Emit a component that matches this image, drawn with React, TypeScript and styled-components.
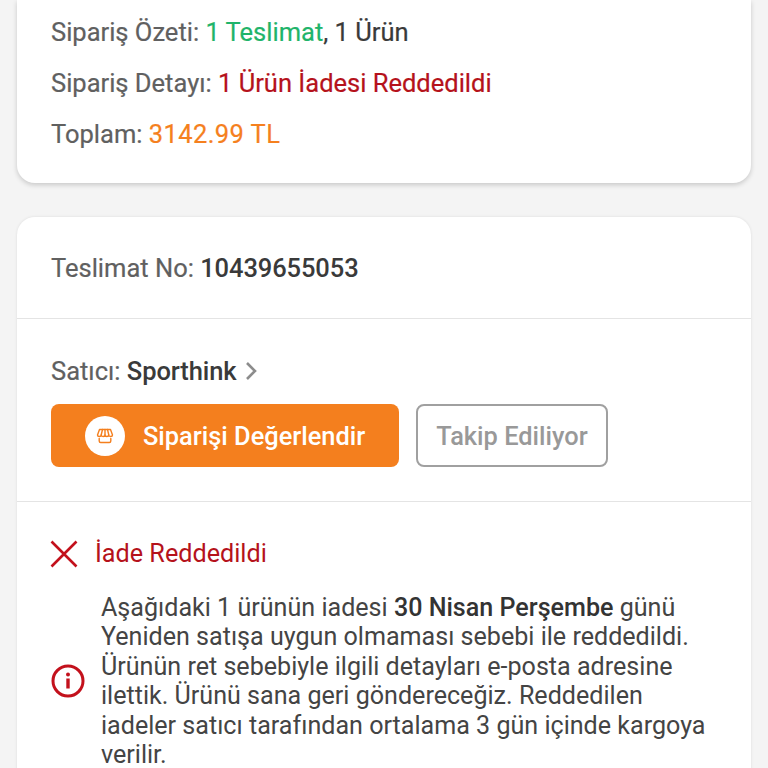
import React from "react";
import styled, { createGlobalStyle } from "styled-components";

const GlobalStyle = createGlobalStyle`
  html, body {
    margin: 0;
    height: 768px;
    overflow: hidden;
    background: #f4f4f4;
    font-family: Roboto, "Liberation Sans", sans-serif;
  }
`;

const Page = styled.div`
  height: 768px;
  overflow: hidden;
  padding: 0 17px;
  display: flex;
  flex-direction: column;
  gap: 34px;
`;

const Card = styled.section<{ $top?: boolean }>`
  background: #fff;
  border-radius: ${(p) => (p.$top ? "0 0 18px 18px" : "18px 18px 0 0")};
  box-shadow: ${(p) => (p.$top ? "0 2px 5px rgba(0, 0, 0, 0.18)" : "0 0 3px rgba(0, 0, 0, 0.1)")};
  flex: none;
`;

const Summary = styled.div`
  padding: 18px 34px 35px;
  display: flex;
  flex-direction: column;
  gap: 23px;
`;

const Line = styled.div`
  font-size: 25.5px;
  line-height: 28px;
  color: #606060;
  white-space: nowrap;
  -webkit-text-stroke: 0.2px currentColor;
`;

const Accent = styled.span<{ $color: string; $spacing?: number }>`
  color: ${(p) => p.$color};
  letter-spacing: ${(p) => p.$spacing || 0}px;
`;

const Plain = styled.span`
  color: #3a3a3a;
`;

const Value = styled.span`
  color: #3a3a3a;
  font-weight: 500;
  letter-spacing: -0.1px;
  -webkit-text-stroke: 0;
`;

const Section = styled.div<{ $last?: boolean }>`
  padding: 0 34px;
  border-bottom: ${(p) => (p.$last ? "none" : "1px solid #e4e4e4")};
`;

const DeliveryRow = styled(Line)`
  padding: 37px 0 36px;
`;

const SellerRow = styled(Line)`
  padding-top: 38px;
  display: flex;
  align-items: center;
  gap: 9px;
`;

const Buttons = styled.div`
  display: flex;
  gap: 17px;
  padding: 19px 0 34px;
`;

const PrimaryButton = styled.button`
  width: 348px;
  height: 63px;
  border: none;
  border-radius: 8px;
  background: #f47f1e;
  color: #fff;
  font: 500 25.4px Roboto, sans-serif;
  display: flex;
  align-items: center;
  gap: 18px;
  padding: 0 0 0 34px;
`;

const IconDisc = styled.span`
  width: 40px;
  height: 40px;
  border-radius: 50%;
  background: #fff;
  display: flex;
  align-items: center;
  justify-content: center;
`;

const OutlineButton = styled.button`
  width: 192px;
  height: 63px;
  border: 2px solid #a0a0a0;
  border-radius: 8px;
  background: #fff;
  color: #999;
  font: 500 25.4px Roboto, sans-serif;
  padding: 0;
`;

const StatusRow = styled.div`
  display: flex;
  align-items: center;
  gap: 17px;
  padding-top: 37px;
  margin-left: -1px;
  color: #b5121b;
  font-size: 25.2px;
  line-height: 30px;
`;

const NoteRow = styled.div`
  display: flex;
  align-items: center;
  gap: 16px;
  padding: 24px 0 30px;
`;

const NoteText = styled.p`
  margin: 0;
  width: 620px;
  font-size: 25.1px;
  line-height: 29.4px;
  color: #444;
`;

const Strong = styled.b`
  font-weight: 500;
  color: #333;
`;

const StoreIcon = () => (
  <svg width="20" height="20" viewBox="0 0 20 20" fill="none" stroke="#f47f1e" strokeWidth="1.4" strokeLinejoin="round" strokeLinecap="round">
    <path d="M4.5 3.500h11l2 5.500c0 1-1 1.500-1.900 1.500s-1.800-.5-1.900-1.500c0 1-1 1.500-1.850 1.500s-1.850-.5-1.850-1.500c0 1-1 1.500-1.850 1.500S6.300 10 6.200 9c0 1-.9 1.500-1.800 1.500S2.500 10 2.500 9z" />
    <path d="M7.500 3.500L6.200 9M10 3.500V9M12.500 3.500L13.800 9" />
    <path d="M4.200 12.500v2.500c0 1 .6 1.500 1.500 1.500h8.600c.9 0 1.500-.5 1.500-1.500v-2.500" />
  </svg>
);

const Chevron = () => (
  <svg width="13" height="20" viewBox="0 0 13 20" fill="none" stroke="#8c8c8c" strokeWidth="2.600">
    <path d="M2 2l8 8-8 8" />
  </svg>
);

const CrossIcon = () => (
  <svg width="28" height="28" viewBox="0 0 28 28" fill="none" stroke="#c3111c" strokeWidth="2.600" style={{ flex: "none" }}>
    <path d="M1.500 1.500l25 25M26.500 1.500l-25 25" />
  </svg>
);

const InfoIcon = () => (
  <svg width="34" height="34" viewBox="0 0 34 34" fill="none" style={{ flex: "none" }}>
    <circle cx="17" cy="17" r="15" stroke="#c3111c" strokeWidth="3" />
    <circle cx="17" cy="10.500" r="2" fill="#c3111c" />
    <rect x="15.300" y="14.500" width="3.400" height="10" fill="#c3111c" />
  </svg>
);

export default function App() {
  return (
    <Page>
      <GlobalStyle />
      <Card $top>
        <Summary>
          <Line>
            Sipariş Özeti: <Accent $color="#1fb46a">1 Teslimat</Accent>
            <Plain>, 1 Ürün</Plain>
          </Line>
          <Line>
            Sipariş Detayı: <Accent $color="#b5121b">1 Ürün İadesi Reddedildi</Accent>
          </Line>
          <Line>
            Toplam: <Accent $color="#f5801e" $spacing={0.4}>3142.99 TL</Accent>
          </Line>
        </Summary>
      </Card>
      <Card>
        <Section>
          <DeliveryRow>
            Teslimat No: <Value>10439655053</Value>
          </DeliveryRow>
        </Section>
        <Section>
          <SellerRow>
            <span>
              Satıcı: <Value>Sporthink</Value>
            </span>
            <Chevron />
          </SellerRow>
          <Buttons>
            <PrimaryButton>
              <IconDisc>
                <StoreIcon />
              </IconDisc>
              Siparişi Değerlendir
            </PrimaryButton>
            <OutlineButton>Takip Ediliyor</OutlineButton>
          </Buttons>
        </Section>
        <Section $last>
          <StatusRow>
            <CrossIcon />
            İade Reddedildi
          </StatusRow>
          <NoteRow>
            <InfoIcon />
            <NoteText>
              Aşağıdaki 1 ürünün iadesi <Strong>30 Nisan Perşembe</Strong> günü Yeniden satışa uygun olmaması sebebi ile
              reddedildi. Ürünün ret sebebiyle ilgili detayları e-posta adresine ilettik. Ürünü sana geri göndereceğiz.
              Reddedilen iadeler satıcı tarafından ortalama 3 gün içinde kargoya verilir.
            </NoteText>
          </NoteRow>
        </Section>
      </Card>
    </Page>
  );
}
